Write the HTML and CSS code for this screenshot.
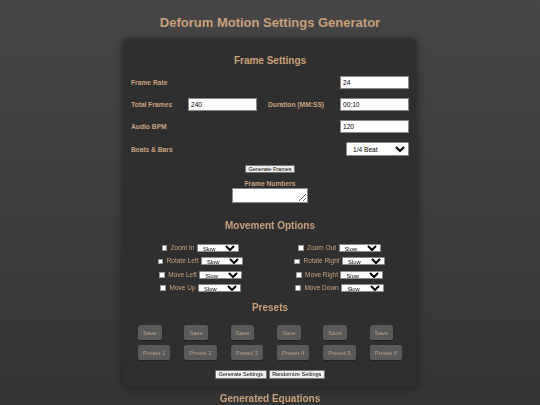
FILE: index.html
```html
<!DOCTYPE html>
<html>
<head>
<meta charset="utf-8">
<link rel="stylesheet" href="styles.css">
</head>
<body>
<h1 class="title">Deforum Motion Settings Generator</h1>
<div class="panel">
  <h2 class="section-title first">Frame Settings</h2>
  <div class="frame-grid">
    <label class="lbl">Frame Rate</label>
    <input class="txt c4" type="text" value="24">
    <label class="lbl">Total Frames</label>
    <input class="txt" type="text" value="240">
    <label class="lbl">Duration (MM:SS)</label>
    <input class="txt" type="text" value="00:10">
    <label class="lbl">Audio BPM</label>
    <input class="txt c4" type="text" value="120">
    <label class="lbl">Beats &amp; Bars</label>
    <select class="beats c4"><option>1/4 Beat</option></select>
  </div>
  <div class="center">
    <button class="std gen-frames">Generate Frames</button>
    <label class="lbl fn-label">Frame Numbers</label>
    <textarea class="frames"></textarea>
  </div>

  <h2 class="section-title spaced">Movement Options</h2>
  <div class="move-grid">
    <div class="move"><input type="checkbox" class="chk"><span class="mname">Zoom In</span><select class="speed"><option>Slow</option></select></div>
    <div class="move"><input type="checkbox" class="chk"><span class="mname">Zoom Out</span><select class="speed"><option>Slow</option></select></div>
    <div class="move"><input type="checkbox" class="chk"><span class="mname">Rotate Left</span><select class="speed"><option>Slow</option></select></div>
    <div class="move"><input type="checkbox" class="chk"><span class="mname">Rotate Right</span><select class="speed"><option>Slow</option></select></div>
    <div class="move"><input type="checkbox" class="chk"><span class="mname">Move Left</span><select class="speed"><option>Slow</option></select></div>
    <div class="move"><input type="checkbox" class="chk"><span class="mname">Move Right</span><select class="speed"><option>Slow</option></select></div>
    <div class="move"><input type="checkbox" class="chk"><span class="mname">Move Up</span><select class="speed"><option>Slow</option></select></div>
    <div class="move"><input type="checkbox" class="chk"><span class="mname">Move Down</span><select class="speed"><option>Slow</option></select></div>
  </div>

  <h2 class="section-title">Presets</h2>
  <div class="preset-grid">
    <div class="preset"><button class="pbtn">Save</button><button class="pbtn">Preset 1</button></div>
    <div class="preset"><button class="pbtn">Save</button><button class="pbtn">Preset 2</button></div>
    <div class="preset"><button class="pbtn">Save</button><button class="pbtn">Preset 3</button></div>
    <div class="preset"><button class="pbtn">Save</button><button class="pbtn">Preset 4</button></div>
    <div class="preset"><button class="pbtn">Save</button><button class="pbtn">Preset 5</button></div>
    <div class="preset"><button class="pbtn">Save</button><button class="pbtn">Preset 6</button></div>
  </div>

  <div class="actions">
    <button class="std">Generate Settings</button>
    <button class="std">Randomize Settings</button>
  </div>
</div>
<h2 class="section-title outside">Generated Equations</h2>
</body>
</html>
```
FILE: styles.css
```css
html, body {
  margin: 0;
  padding: 0;
}
body {
  min-height: 405px;
  background: linear-gradient(#464646, #343434);
  font-family: "Liberation Sans", Arial, sans-serif;
  color: #c9a27c;
  overflow: hidden;
}
.title {
  margin: 0;
  padding-top: 15px;
  font-size: 13px;
  line-height: 15px;
  font-weight: bold;
  text-align: center;
  color: #c9a07a;
}
.panel {
  box-sizing: border-box;
  width: 294px;
  margin: 8px auto 0;
  padding: 0 8px 8px;
  background: #2f2f2f;
  border-radius: 6px;
  box-shadow: 0 1px 8px rgba(0, 0, 0, 0.45);
}
.section-title {
  margin: 10px 0 0;
  font-size: 10px;
  line-height: 12px;
  font-weight: bold;
  text-align: center;
  color: #c9a07a;
}
.section-title.first {
  margin-top: 0;
  padding-top: 17px;
}
.section-title.spaced {
  margin-top: 17px;
}
.outside {
  margin-top: 6px;
}
.frame-grid {
  display: grid;
  grid-template-columns: 46px 69px 61px 69px;
  column-gap: 11px;
  row-gap: 9px;
  align-items: center;
  margin-top: 9px;
}
.lbl {
  font-size: 6.7px;
  font-weight: bold;
  color: #c9a27e;
  white-space: nowrap;
}
.c4 {
  grid-column: 4;
}
.txt {
  box-sizing: border-box;
  width: 69px;
  height: 13px;
  margin: 0;
  padding: 0 2px;
  border: 0.5px solid #8a8a8a;
  background: #fff;
  font-family: "Liberation Sans", Arial, sans-serif;
  font-size: 6.6px;
  color: #000;
}
.beats {
  box-sizing: border-box;
  justify-self: end;
  width: 63px;
  height: 14px;
  margin: 0;
  padding: 0 2px;
  border: 0.5px solid #8a8a8a;
  border-radius: 1px;
  background: #fff;
  font-family: "Liberation Sans", Arial, sans-serif;
  font-size: 6.6px;
  color: #000;
}
.center {
  display: flex;
  flex-direction: column;
  align-items: center;
}
.std {
  box-sizing: border-box;
  height: 8.5px;
  margin: 0;
  padding: 0 2.6px;
  border: 0.5px solid #767676;
  border-radius: 1px;
  background: #efefef;
  font-family: "Liberation Sans", Arial, sans-serif;
  font-size: 5.5px;
  line-height: 7px;
  color: #000;
  white-space: nowrap;
}
.gen-frames {
  margin-top: 8.5px;
}
.fn-label {
  display: block;
  margin-top: 5.5px;
  line-height: 9px;
}
.frames {
  box-sizing: border-box;
  display: block;
  width: 76px;
  height: 15.5px;
  margin: 0;
  padding: 1px;
  border: 0.5px solid #8a8a8a;
  background: #fff;
  resize: both;
}
.move-grid {
  display: grid;
  grid-template-columns: 1fr 1fr;
  row-gap: 5.4px;
  margin-top: 12px;
}
.move {
  display: flex;
  justify-content: center;
  align-items: center;
  height: 8px;
}
.chk {
  appearance: none;
  -webkit-appearance: none;
  box-sizing: border-box;
  width: 5.6px;
  height: 5.6px;
  margin: 0 3.5px 0 0;
  border: 0.5px solid #9a9a9a;
  border-radius: 0.5px;
  background: #fff;
}
.mname {
  font-size: 6.5px;
  line-height: 8px;
  color: #c9a27e;
  white-space: nowrap;
}
.speed {
  box-sizing: border-box;
  width: 42.5px;
  height: 8px;
  margin: 0 0 0 2.5px;
  padding: 0 1px;
  border: 0.5px solid #8a8a8a;
  border-radius: 1px;
  background: #fff;
  font-family: "Liberation Sans", Arial, sans-serif;
  font-size: 5.8px;
  color: #000;
}
.preset-grid {
  display: grid;
  grid-template-columns: repeat(6, 1fr);
  margin-top: 11px;
}
.preset {
  display: flex;
  flex-direction: column;
  align-items: flex-start;
  gap: 5px;
  padding-left: 7px;
}
.pbtn {
  height: 15px;
  margin: 0;
  padding: 0 5px;
  border: none;
  border-radius: 2px;
  background: #5a5a5a;
  box-shadow: 0 0.5px 1px rgba(0, 0, 0, 0.3);
  font-family: "Liberation Sans", Arial, sans-serif;
  font-size: 6px;
  color: #b8a085;
}
.actions {
  display: flex;
  justify-content: center;
  gap: 2px;
  margin-top: 10px;
}
```
